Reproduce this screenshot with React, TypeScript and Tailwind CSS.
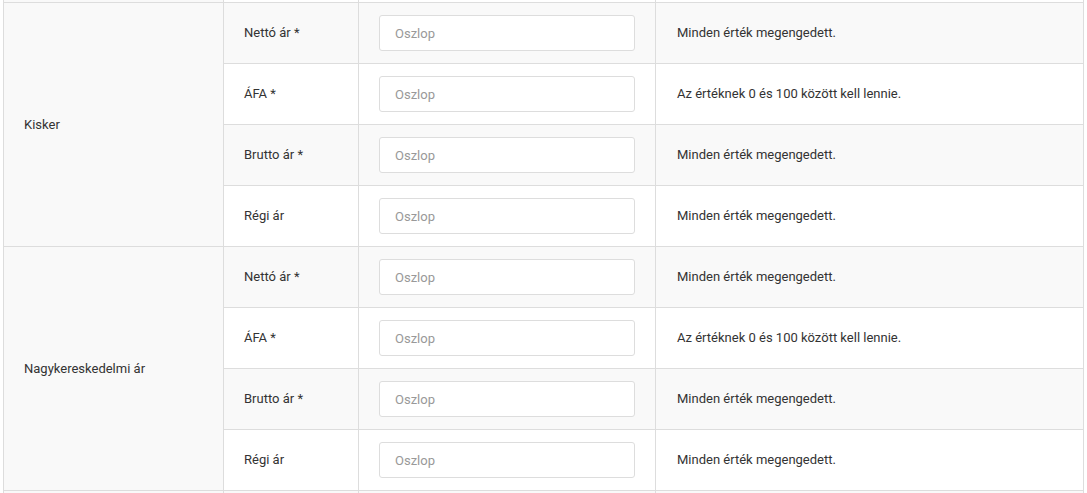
import { Fragment } from 'react'

const groups = ['Kisker', 'Nagykereskedelmi ár']

const fields = [
  { label: 'Nettó ár *', hint: 'Minden érték megengedett.' },
  { label: 'ÁFA *', hint: 'Az értéknek 0 és 100 között kell lennie.' },
  { label: 'Brutto ár *', hint: 'Minden érték megengedett.' },
  { label: 'Régi ár', hint: 'Minden érték megengedett.' },
]

function FieldRow({ label, hint, striped }: { label: string; hint: string; striped: boolean }) {
  const bg = striped ? 'bg-[#f9f9f9]' : 'bg-white'
  return (
    <>
      <div className={`${bg} h-[61px] border-r border-b border-[#ddd] flex items-center pl-5`}>{label}</div>
      <div className={`${bg} h-[61px] border-r border-b border-[#ddd] flex items-center px-5`}>
        <input
          type="text"
          placeholder="Oszlop"
          className="w-full h-9 bg-white border border-[#ddd] rounded-[3px] px-[15px] text-[13px] text-[#333] placeholder:text-[#999] outline-none"
        />
      </div>
      <div className={`${bg} h-[61px] border-r border-b border-[#ddd] flex items-center pl-[21px]`}>{hint}</div>
    </>
  )
}

export default function App() {
  return (
    <div
      className="h-[493px] overflow-hidden bg-white px-[3px] text-[13px] text-[#333]"
      style={{ fontFamily: 'Roboto, "Noto Sans", sans-serif' }}
    >
      <div className="grid grid-cols-[220px_135px_297px_428px] border-l border-[#ddd]">
        {/* tail of the previous group */}
        <div className="h-[3px] bg-[#f9f9f9] border-r border-b border-[#ddd]" />
        <div className="h-[3px] bg-white border-r border-b border-[#ddd]" />
        <div className="h-[3px] bg-white border-r border-b border-[#ddd]" />
        <div className="h-[3px] bg-white border-r border-b border-[#ddd]" />

        {groups.map((name) => (
          <Fragment key={name}>
            <div className="row-span-4 bg-[#f9f9f9] border-r border-b border-[#ddd] flex items-center pl-5">
              {name}
            </div>
            {fields.map((f, i) => (
              <FieldRow key={f.label} label={f.label} hint={f.hint} striped={i % 2 === 0} />
            ))}
          </Fragment>
        ))}

        {/* start of the next group */}
        <div className="h-[10px] bg-[#f9f9f9] border-r border-[#ddd]" />
        <div className="h-[10px] bg-[#f9f9f9] border-r border-[#ddd]" />
        <div className="h-[10px] bg-[#f9f9f9] border-r border-[#ddd]" />
        <div className="h-[10px] bg-[#f9f9f9] border-r border-[#ddd]" />
      </div>
    </div>
  )
}
